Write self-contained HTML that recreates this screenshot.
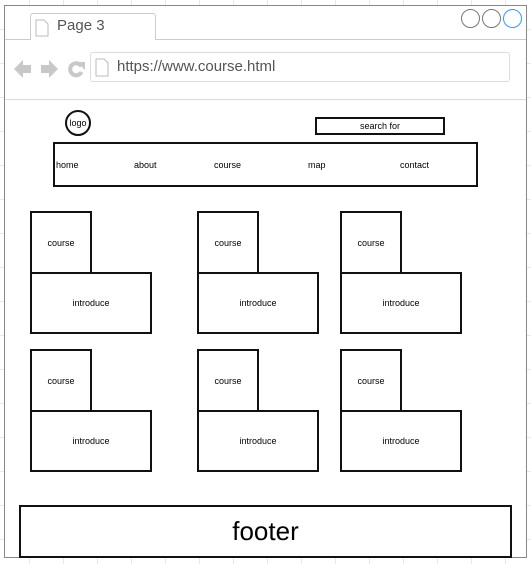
<!DOCTYPE html><html><head><style>
body{margin:0;width:531px;height:564px;position:relative;overflow:hidden;font-family:"Liberation Sans",sans-serif;background:#fff;
background-image:linear-gradient(#e8e8e8 1px,transparent 1px),linear-gradient(90deg,#e8e8e8 1px,transparent 1px);background-size:34px 34px;background-position:-5px -5px}
.a{position:absolute;box-sizing:border-box}
.b{border:2px solid #111;background:#fff;display:flex;align-items:center;justify-content:center;font-size:9px;color:#000}
</style></head><body>
<div class="a" style="left:4px;top:5px;width:523px;height:553px;border:1px solid #888;background:#fff"></div>
<div class="a" style="left:5px;top:39px;width:521px;height:1px;background:#ccc"></div>
<div class="a" style="left:30px;top:13px;width:126px;height:27px;border:1px solid #ccc;border-bottom:none;border-radius:3px 3px 0 0;background:#fff"></div>
<svg class="a" style="left:35px;top:19px" width="14" height="18"><path d="M1 1h8l4 4v12H1z" fill="#fff" stroke="#bbb"/></svg>
<div class="a" style="left:57px;top:17px;font-size:15px;color:#555">Page 3</div>
<div class="a" style="left:461px;top:9px;width:19px;height:19px;border:1px solid #777;border-radius:50%"></div>
<div class="a" style="left:482px;top:9px;width:19px;height:19px;border:1px solid #777;border-radius:50%"></div>
<div class="a" style="left:503px;top:9px;width:19px;height:19px;border:1px solid #39f;border-radius:50%"></div>
<svg class="a" style="left:13px;top:58px" width="75" height="22"><path d="M1 11l9-9v5h8v8h-8v5z" fill="#c8c8c8"/><path d="M45 11l-9-9v5h-8v8h8v5z" fill="#c8c8c8"/><path d="M68.5 8.5A6 6 0 1 0 68.5 14" fill="none" stroke="#c8c8c8" stroke-width="4"/><path d="M64 4h8v8z" fill="#c8c8c8"/></svg>
<div class="a" style="left:90px;top:52px;width:420px;height:30px;border:1px solid #ddd;border-radius:3px"></div>
<svg class="a" style="left:95px;top:58px" width="14" height="19"><path d="M1 1h8l4 4v13H1z" fill="#fff" stroke="#bbb"/></svg>
<div class="a" style="left:117px;top:58px;font-size:15px;color:#555">https://www.course.html</div>
<div class="a" style="left:5px;top:99px;width:521px;height:1px;background:#ddd"></div>
<div class="a b" style="left:65px;top:110px;width:26px;height:26px;border-radius:50%">logo</div>
<div class="a b" style="left:315px;top:117px;width:130px;height:18px">search for</div>
<div class="a" style="left:53px;top:142px;width:425px;height:45px;border:2px solid #111"></div>
<div class="a" style="left:56px;top:160px;font-size:9px">home</div>
<div class="a" style="left:134px;top:160px;font-size:9px">about</div>
<div class="a" style="left:214px;top:160px;font-size:9px">course</div>
<div class="a" style="left:308px;top:160px;font-size:9px">map</div>
<div class="a" style="left:400px;top:160px;font-size:9px">contact</div>

<div class="a b" style="left:30px;top:211px;width:62px;height:63px">course</div>
<div class="a b" style="left:30px;top:272px;width:122px;height:62px">introduce</div>
<div class="a b" style="left:197px;top:211px;width:62px;height:63px">course</div>
<div class="a b" style="left:197px;top:272px;width:122px;height:62px">introduce</div>
<div class="a b" style="left:340px;top:211px;width:62px;height:63px">course</div>
<div class="a b" style="left:340px;top:272px;width:122px;height:62px">introduce</div>
<div class="a b" style="left:30px;top:349px;width:62px;height:63px">course</div>
<div class="a b" style="left:30px;top:410px;width:122px;height:62px">introduce</div>
<div class="a b" style="left:197px;top:349px;width:62px;height:63px">course</div>
<div class="a b" style="left:197px;top:410px;width:122px;height:62px">introduce</div>
<div class="a b" style="left:340px;top:349px;width:62px;height:63px">course</div>
<div class="a b" style="left:340px;top:410px;width:122px;height:62px">introduce</div>

<div class="a b" style="left:19px;top:505px;width:493px;height:53px;font-size:26px">footer</div>
</body></html>
